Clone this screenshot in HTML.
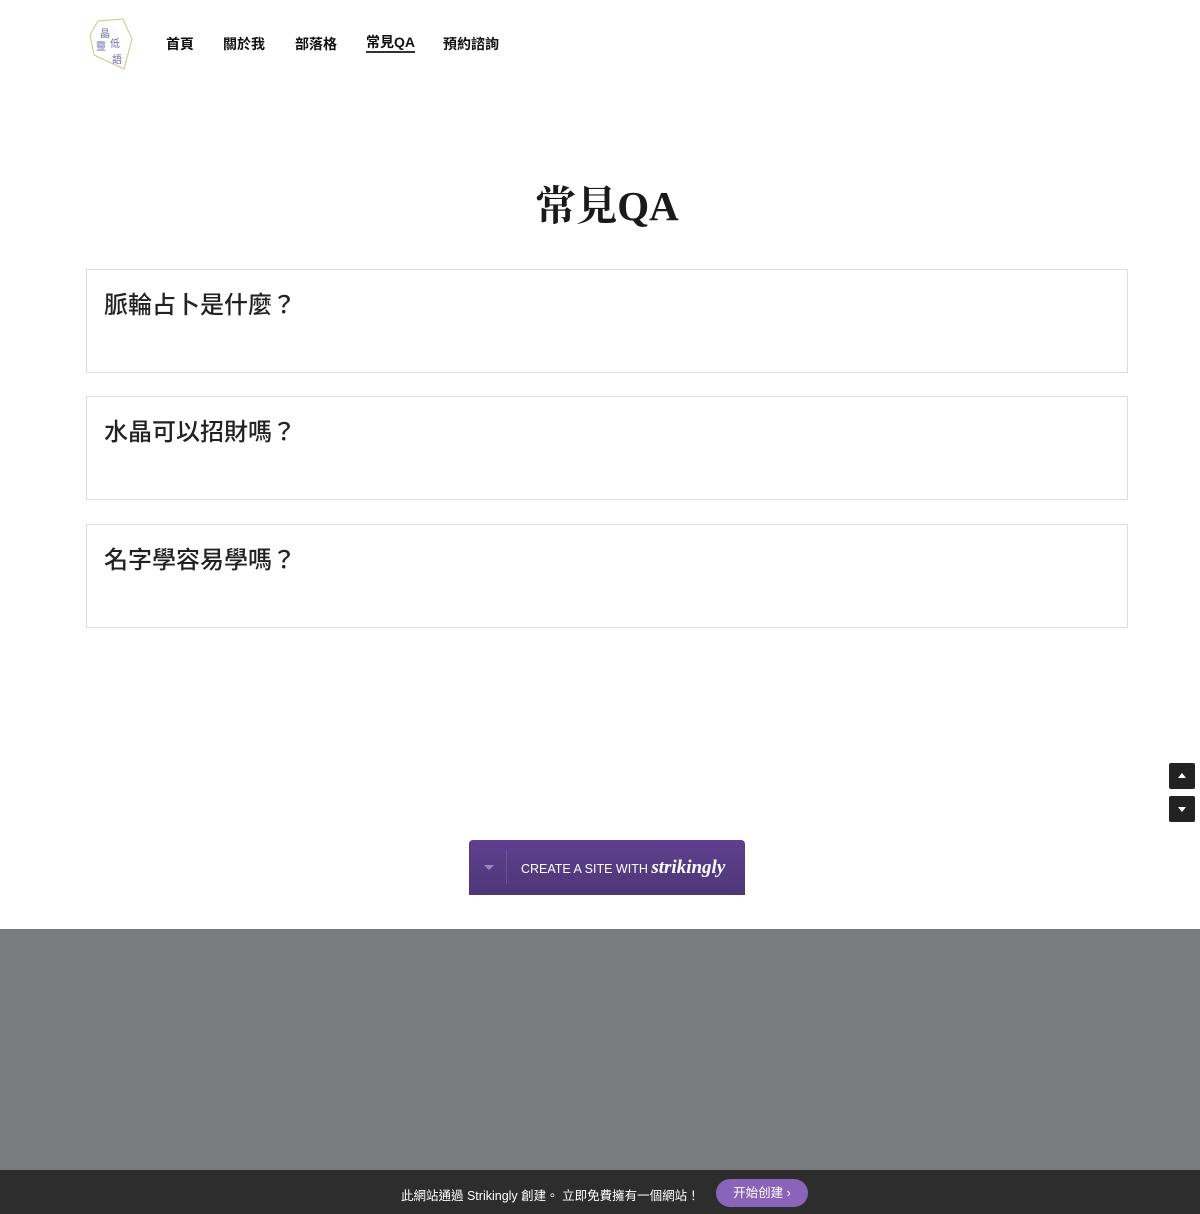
<!DOCTYPE html>
<html><head><meta charset="utf-8"><style>
body{margin:0;width:1200px;height:1214px;position:relative;background:#fff;font-family:"Liberation Sans","Noto Sans CJK TC",sans-serif;color:#222;overflow:hidden}
.nav a{position:absolute;top:34px;font-size:14px;font-weight:bold;color:#111;text-decoration:none}
h1{position:absolute;top:173px;left:0;width:1200px;text-align:center;margin:0;font-family:"Liberation Serif","Noto Serif CJK SC",serif;font-size:41px;font-weight:bold;color:#1a1a1a;padding-left:14px;box-sizing:border-box}
.q{position:absolute;left:86px;width:1040px;height:102px;border:1px solid #dcdcdc}
.q span{position:absolute;left:17px;top:15px;font-size:24px;font-weight:500;color:#222}
.arr{position:absolute;left:1169px;width:26px;height:26px;background:#222;border-radius:2px}
.arr:after{content:"";position:absolute;left:9px;border-left:4px solid transparent;border-right:4px solid transparent}
.up:after{top:10px;border-bottom:5px solid #fff}
.dn:after{top:11px;border-top:5px solid #fff}
</style></head><body>
<svg style="position:absolute;left:88px;top:17px" width="46" height="55"><polygon points="10,4 35,2 44,22 36,52 6,38 2,18" fill="none" stroke="#d9c18a" stroke-width="1"/><text x="12" y="20" font-size="10" fill="#6b6aa8">晶</text><text x="8" y="33" font-size="10" fill="#6b6aa8">靈</text><text x="22" y="30" font-size="10" fill="#6b6aa8">低</text><text x="24" y="46" font-size="10" fill="#6b6aa8">語</text></svg>
<div class="nav">
<a style="left:166px">首頁</a><a style="left:223px">關於我</a><a style="left:295px">部落格</a><a style="left:366px;border-bottom:2px solid #333;line-height:17px">常見QA</a><a style="left:443px">預約諮詢</a>
</div>
<h1>常見QA</h1>
<div class="q" style="top:269px"><span>脈輪占卜是什麼？</span></div>
<div class="q" style="top:396px"><span>水晶可以招財嗎？</span></div>
<div class="q" style="top:524px"><span>名字學容易學嗎？</span></div>
<div class="arr up" style="top:763px"></div>
<div class="arr dn" style="top:796px"></div>
<div style="position:absolute;left:469px;top:840px;width:276px;height:55px;background:linear-gradient(#5f3f8e,#4d3878);border-radius:4px 4px 0 0;color:#fff">
<div style="position:absolute;left:15px;top:25px;border-left:5px solid transparent;border-right:5px solid transparent;border-top:5px solid #9a87bd"></div>
<div style="position:absolute;left:37px;top:10px;width:1px;height:34px;background:#6d5298"></div>
<div style="position:absolute;left:52px;top:17px;font-size:12.5px">CREATE A SITE WITH <b style="font-style:italic;font-family:'Liberation Serif',serif;font-size:19px">strikingly</b></div>
</div>
<div style="position:absolute;left:0;top:929px;width:1200px;height:241px;background:#7a7b7d"></div>
<div style="position:absolute;left:0;top:1170px;width:1200px;height:44px;background:#2d2d2d;color:#fff;font-size:12.5px">
<span style="position:absolute;left:401px;top:15px">此網站通過 Strikingly 創建。 立即免費擁有一個網站！</span>
<span style="position:absolute;left:716px;top:9px;width:92px;height:28px;background:#8a64b9;border-radius:14px;text-align:center;line-height:28px">开始创建 ›</span>
</div>
</body></html>
